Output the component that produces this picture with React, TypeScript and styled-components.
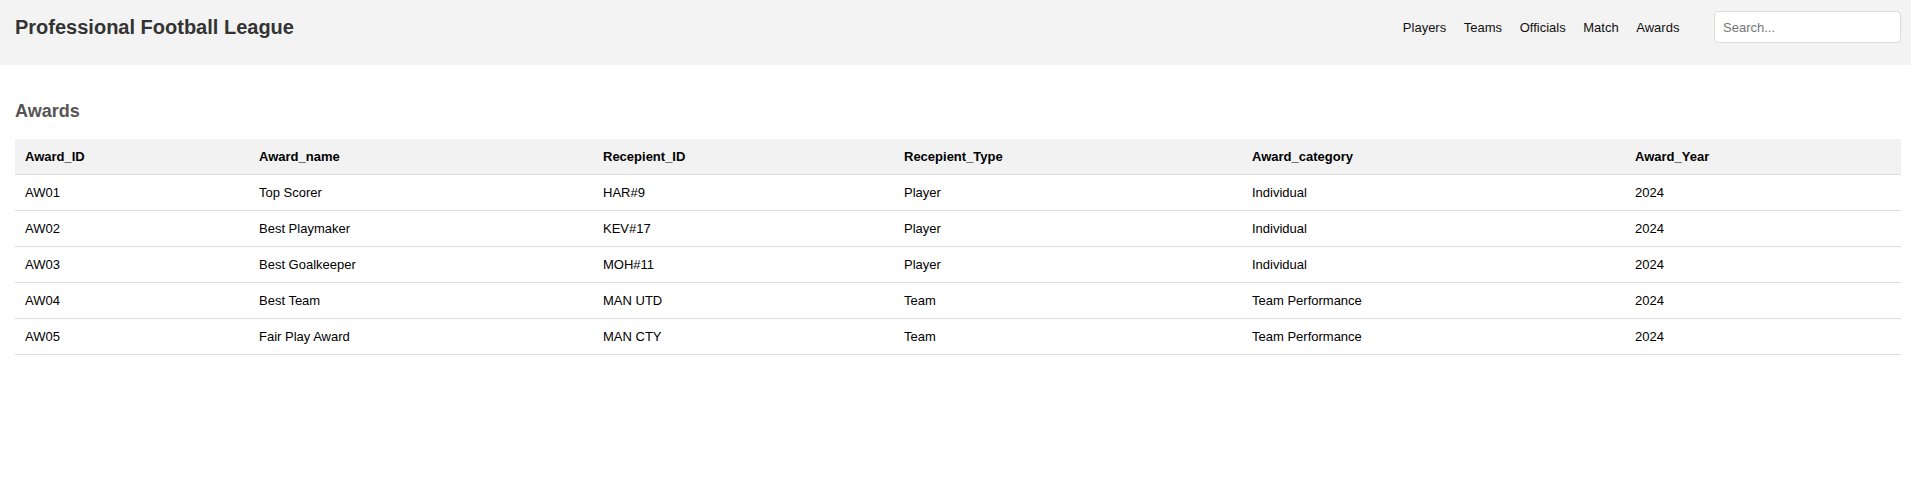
import React from "react";
import styled, { createGlobalStyle } from "styled-components";

const GlobalStyle = createGlobalStyle`
  html, body {
    margin: 0;
    padding: 0;
    background: #ffffff;
    font-family: "Liberation Sans", Arial, Helvetica, sans-serif;
  }
  * { box-sizing: border-box; }
`;

const Header = styled.header`
  height: 65px;
  background: #f3f3f3;
  display: flex;
  align-items: flex-start;
  justify-content: space-between;
  padding: 11px 10px 0 15px;
`;

const Bar = styled.div`
  height: 32px;
  display: flex;
  align-items: center;
`;

const Title = styled.h1`
  margin: 0;
  font-size: 20px;
  font-weight: bold;
  color: #333333;
  line-height: 23px;
`;

const Nav = styled.nav`
  display: flex;
  align-items: center;
  gap: 17.6px;
  margin-right: 34.6px;
  padding-top: 1px;
`;

const NavLink = styled.a`
  font-size: 13px;
  color: #111111;
  text-decoration: none;
  cursor: pointer;
`;

const SearchInput = styled.input`
  width: 187px;
  height: 32px;
  border: 1px solid #dddddd;
  border-radius: 4px;
  padding: 0 8px;
  font-size: 13px;
  font-family: "Liberation Sans", Arial, sans-serif;
  color: #333;
  background: #ffffff;
  outline: none;
  &::placeholder {
    color: #767676;
  }
`;

const Main = styled.main`
  padding: 36px 10px 0 15px;
`;

const SectionTitle = styled.h2`
  margin: 0 0 18px 0;
  font-size: 18px;
  font-weight: bold;
  color: #555555;
  line-height: 20px;
`;

const Table = styled.table`
  width: 100%;
  border-collapse: collapse;
  table-layout: fixed;
`;

const Col = styled.col<{ $w: number }>`
  width: ${(p) => p.$w}px;
`;

const HeadCell = styled.th`
  background: #f2f2f2;
  text-align: left;
  font-size: 13px;
  font-weight: bold;
  color: #000000;
  padding: 10px;
  line-height: 15px;
  border-bottom: 1px solid #dddddd;
`;

const Cell = styled.td`
  text-align: left;
  font-size: 13px;
  color: #000000;
  padding: 10px;
  line-height: 15px;
  border-bottom: 1px solid #dddddd;
`;

const columns = [
  { key: "Award_ID", w: 234 },
  { key: "Award_name", w: 344 },
  { key: "Recepient_ID", w: 301 },
  { key: "Recepient_Type", w: 348 },
  { key: "Award_category", w: 383 },
  { key: "Award_Year", w: 276 },
];

const rows = [
  ["AW01", "Top Scorer", "HAR#9", "Player", "Individual", "2024"],
  ["AW02", "Best Playmaker", "KEV#17", "Player", "Individual", "2024"],
  ["AW03", "Best Goalkeeper", "MOH#11", "Player", "Individual", "2024"],
  ["AW04", "Best Team", "MAN UTD", "Team", "Team Performance", "2024"],
  ["AW05", "Fair Play Award", "MAN CTY", "Team", "Team Performance", "2024"],
];

export default function App() {
  return (
    <>
      <GlobalStyle />
      <Header>
        <Bar>
          <Title>Professional Football League</Title>
        </Bar>
        <Bar>
          <Nav>
            <NavLink>Players</NavLink>
            <NavLink>Teams</NavLink>
            <NavLink>Officials</NavLink>
            <NavLink>Match</NavLink>
            <NavLink>Awards</NavLink>
          </Nav>
          <SearchInput type="text" placeholder="Search..." />
        </Bar>
      </Header>
      <Main>
        <SectionTitle>Awards</SectionTitle>
        <Table>
          <colgroup>
            {columns.map((c) => (
              <Col key={c.key} $w={c.w} />
            ))}
          </colgroup>
          <thead>
            <tr>
              {columns.map((c) => (
                <HeadCell key={c.key}>{c.key}</HeadCell>
              ))}
            </tr>
          </thead>
          <tbody>
            {rows.map((r) => (
              <tr key={r[0]}>
                {r.map((v, i) => (
                  <Cell key={i}>{v}</Cell>
                ))}
              </tr>
            ))}
          </tbody>
        </Table>
      </Main>
    </>
  );
}
